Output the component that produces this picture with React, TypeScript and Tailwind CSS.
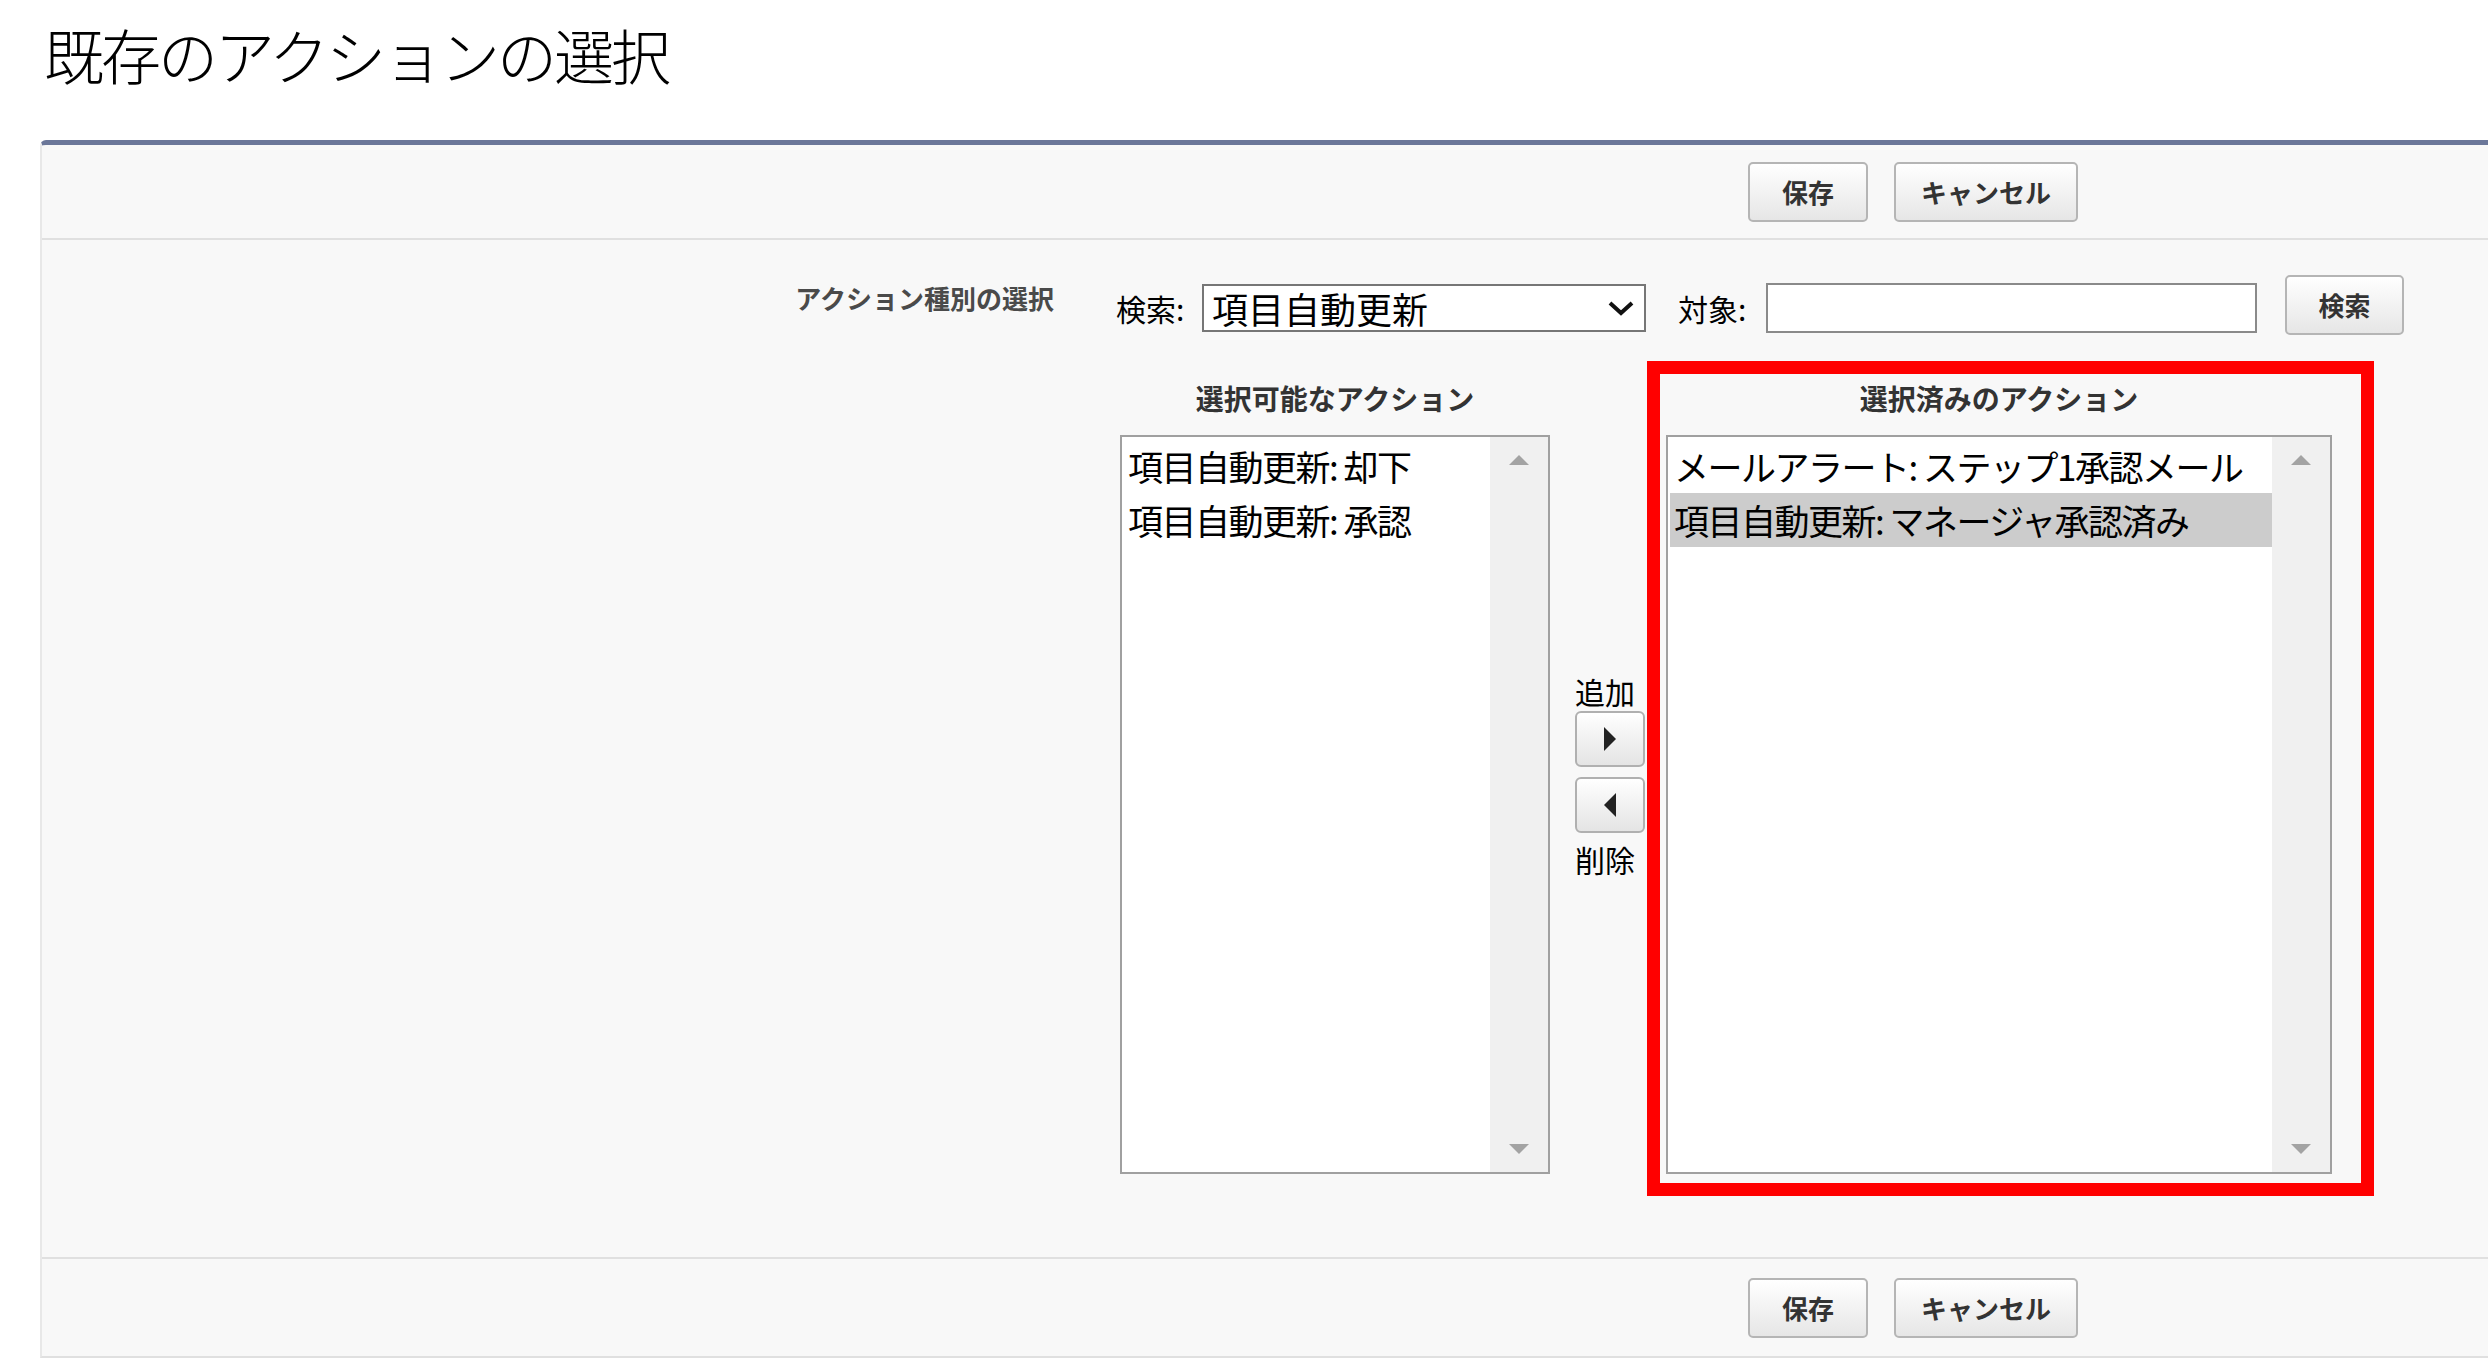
import React from "react";

const F = { fontFamily: '"Noto Sans CJK JP", "Noto Sans", sans-serif' };

function Btn({ children, w }: { children: React.ReactNode; w: string }) {
  return (
    <button
      className={`${w} h-[60px] rounded-[5px] border-2 border-[#b5b5b5] bg-gradient-to-b from-white to-[#e6e6e6] text-[26px] font-bold text-[#333] leading-none`}
    >
      {children}
    </button>
  );
}

function Scroll() {
  return (
    <div className="w-[58px] bg-[#f0f0f0] flex flex-col items-center justify-between py-[18px]">
      <div className="w-0 h-0 border-l-[10px] border-r-[10px] border-b-[10px] border-l-transparent border-r-transparent border-b-[#a3a3a3]" />
      <div className="w-0 h-0 border-l-[10px] border-r-[10px] border-t-[10px] border-l-transparent border-r-transparent border-t-[#a3a3a3]" />
    </div>
  );
}

function ListBox({ w, items, sel }: { w: string; items: string[]; sel?: number }) {
  return (
    <div className={`${w} h-[739px] border-2 border-[#a0a0a0] bg-white flex`}>
      <div className="flex-1 pt-[2px] pl-[2px] overflow-hidden">
        {items.map((t, i) => (
          <div
            key={i}
            className={`h-[54px] pl-[4px] text-[35px] tracking-[-1.5px] leading-[54px] whitespace-nowrap text-black ${sel === i ? "bg-[#cccccc]" : ""}`}
          >
            {t}
          </div>
        ))}
      </div>
      <Scroll />
    </div>
  );
}

function ArrowBtn({ dir }: { dir: "r" | "l" }) {
  return (
    <div className="w-[70px] h-[56px] rounded-[6px] border-2 border-[#b0b0b0] bg-gradient-to-b from-white to-[#e4e4e4] flex items-center justify-center">
      {dir === "r" ? (
        <div className="w-0 h-0 border-t-[12px] border-b-[12px] border-l-[12px] border-t-transparent border-b-transparent border-l-[#222]" />
      ) : (
        <div className="w-0 h-0 border-t-[12px] border-b-[12px] border-r-[12px] border-t-transparent border-b-transparent border-r-[#222]" />
      )}
    </div>
  );
}

export default function App() {
  return (
    <div style={F} className="w-[2488px] h-[1368px] bg-white overflow-hidden text-black">
      <div className="h-[140px] pl-[44px] pt-[14px]">
        <h1 className="text-[60px] font-light leading-[80px] tracking-[-3px]">既存のアクションの選択</h1>
      </div>
      <div className="ml-[40px] h-[1218px] bg-[#f8f8f8] border-t-[5px] border-t-[#6b7799] border-l-2 border-l-[#e8e8e8] border-b-2 border-b-[#e0e0e0] rounded-tl-[6px] flex flex-col">
        <div className="h-[95px] border-b-2 border-[#e0e0e0] flex items-center gap-[26px] pl-[1706px]">
          <Btn w="w-[120px]">保存</Btn>
          <Btn w="w-[184px]">キャンセル</Btn>
        </div>
        <div className="flex-1 flex pt-[36px]">
          <div className="w-[1012px] text-right text-[26px] font-bold text-[#4a4a4a] pt-[2px]">アクション種別の選択</div>
          <div className="ml-[62px] flex flex-col">
            <div className="flex items-center h-[40px] mt-[12px] text-[30px]">
              <span className="w-[86px]">検索:</span>
              <div className="w-[444px] h-[48px] border-2 border-[#767676] bg-white flex items-center justify-between px-[8px]">
                <span className="text-[36px] leading-none">項目自動更新</span>
                <svg width="30" height="20" viewBox="0 0 30 20"><path d="M4 5 L15 15 L26 5" fill="none" stroke="#111" strokeWidth="4" /></svg>
              </div>
              <span className="ml-[32px] w-[88px]">対象:</span>
              <div className="w-[491px] h-[50px] border-2 border-[#8a8a8a] bg-white" />
              <div className="ml-[28px] mt-[-6px]"><Btn w="w-[119px]">検索</Btn></div>
            </div>
            <div className="relative flex mt-[51px]">
              <div className="flex flex-col items-center w-[430px] ml-[4px]">
                <div className="text-[28px] font-bold text-[#333] h-[38px] leading-[38px] mb-[18px]">選択可能なアクション</div>
                <ListBox w="w-[430px]" items={["項目自動更新: 却下", "項目自動更新: 承認"]} />
              </div>
              <div className="w-[116px] pl-[25px] flex flex-col pt-[292px] text-[30px] leading-[40px]">
                <span>追加</span>
                <ArrowBtn dir="r" />
                <div className="h-[10px]" />
                <ArrowBtn dir="l" />
                <span className="mt-[6px]">削除</span>
              </div>
              <div className="flex flex-col items-center w-[666px]">
                <div className="text-[28px] font-bold text-[#333] h-[38px] leading-[38px] mb-[18px]">選択済みのアクション</div>
                <ListBox w="w-[666px]" items={["メールアラート: ステップ1承認メール", "項目自動更新: マネージャ承認済み"]} sel={1} />
              </div>
              <div className="absolute left-[531px] top-[-18px] w-[727px] h-[835px] border-[13px] border-[#ff0000] pointer-events-none" />
            </div>
          </div>
        </div>
        <div className="h-[99px] border-t-2 border-[#e0e0e0] flex items-center gap-[26px] pl-[1706px]">
          <Btn w="w-[120px]">保存</Btn>
          <Btn w="w-[184px]">キャンセル</Btn>
        </div>
      </div>
    </div>
  );
}
